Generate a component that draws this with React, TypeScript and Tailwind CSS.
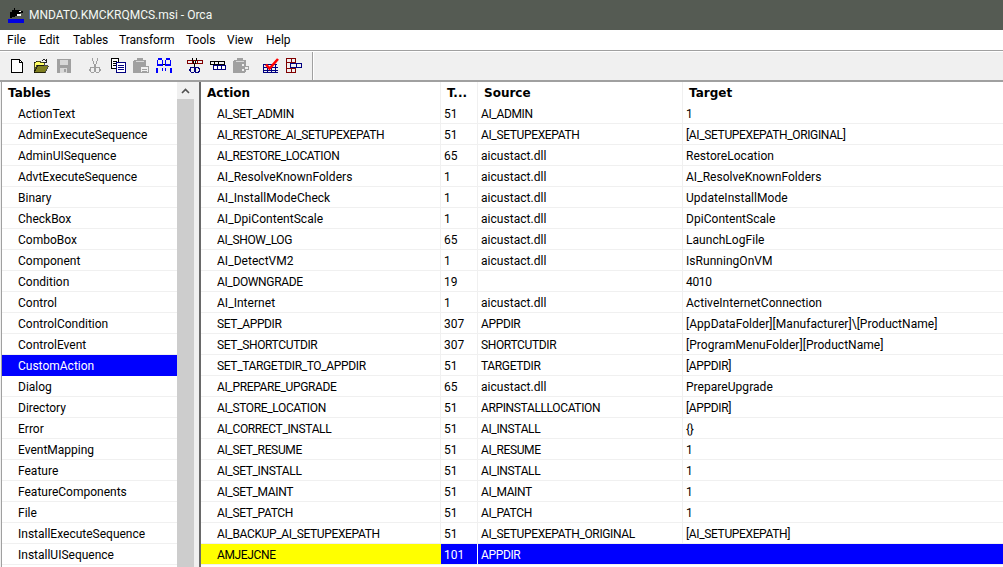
import React from "react";

const tables = ["ActionText","AdminExecuteSequence","AdminUISequence","AdvtExecuteSequence","Binary","CheckBox","ComboBox","Component","Condition","Control","ControlCondition","ControlEvent","CustomAction","Dialog","Directory","Error","EventMapping","Feature","FeatureComponents","File","InstallExecuteSequence","InstallUISequence"];
const rows: [string,string,string,string][] = [
["AI_SET_ADMIN","51","AI_ADMIN","1"],
["AI_RESTORE_AI_SETUPEXEPATH","51","AI_SETUPEXEPATH","[AI_SETUPEXEPATH_ORIGINAL]"],
["AI_RESTORE_LOCATION","65","aicustact.dll","RestoreLocation"],
["AI_ResolveKnownFolders","1","aicustact.dll","AI_ResolveKnownFolders"],
["AI_InstallModeCheck","1","aicustact.dll","UpdateInstallMode"],
["AI_DpiContentScale","1","aicustact.dll","DpiContentScale"],
["AI_SHOW_LOG","65","aicustact.dll","LaunchLogFile"],
["AI_DetectVM2","1","aicustact.dll","IsRunningOnVM"],
["AI_DOWNGRADE","19","","4010"],
["AI_Internet","1","aicustact.dll","ActiveInternetConnection"],
["SET_APPDIR","307","APPDIR","[AppDataFolder][Manufacturer]\\[ProductName]"],
["SET_SHORTCUTDIR","307","SHORTCUTDIR","[ProgramMenuFolder][ProductName]"],
["SET_TARGETDIR_TO_APPDIR","51","TARGETDIR","[APPDIR]"],
["AI_PREPARE_UPGRADE","65","aicustact.dll","PrepareUpgrade"],
["AI_STORE_LOCATION","51","ARPINSTALLLOCATION","[APPDIR]"],
["AI_CORRECT_INSTALL","51","AI_INSTALL","{}"],
["AI_SET_RESUME","51","AI_RESUME","1"],
["AI_SET_INSTALL","51","AI_INSTALL","1"],
["AI_SET_MAINT","51","AI_MAINT","1"],
["AI_SET_PATCH","51","AI_PATCH","1"],
["AI_BACKUP_AI_SETUPEXEPATH","51","AI_SETUPEXEPATH_ORIGINAL","[AI_SETUPEXEPATH]"],
];

const fit = (s: string) => (/^[^a-z]+$/.test(s) ? "tracking-[-0.36px]" : "tracking-[0.04px]");

const Ico = ({ children }: { children: React.ReactNode }) => (
  <svg width={16} height={16} viewBox="0 0 16 16" shapeRendering="crispEdges" className="block shrink-0">{children}</svg>
);

const NewIcon = () => <Ico><path d="M1.5 1.5h8l3 3v10h-11z" fill="#fff" stroke="#000"/><path d="M9.5 1.5v3h3" fill="none" stroke="#000"/></Ico>;
const OpenIcon = () => <Ico><path d="M1 14V4h2V3h4v1h4v3H4l-3 7z" fill="#ffff66" stroke="#000" strokeWidth=".7"/><path d="M1 14.5l3-7h11l-3 7z" fill="#7f7f20" stroke="#000" strokeWidth=".7"/><path d="M9 3c1-2 3-2 4 0M13 1v3h-3" fill="none" stroke="#222"/></Ico>;
const SaveIcon = () => <Ico><rect x="1" y="1" width="14" height="14" fill="#a0a0a0"/><rect x="4" y="2" width="8" height="5" fill="#d8d8d8"/><rect x="4" y="10" width="7" height="5" fill="#d8d8d8"/><rect x="8" y="11" width="2" height="3" fill="#a0a0a0"/></Ico>;
const CutIcon = () => <Ico><path d="M5 0l3 9M11 0L8 9" stroke="#a0a0a0" strokeWidth="1.2" fill="none"/><circle cx="5.5" cy="12" r="2.5" fill="none" stroke="#a0a0a0" strokeWidth="1.2"/><circle cx="10.5" cy="12" r="2.5" fill="none" stroke="#a0a0a0" strokeWidth="1.2"/></Ico>;
const CopyIcon = () => <Ico><rect x="1.5" y="0.5" width="7" height="10" fill="#fff" stroke="#000"/><path d="M3 3h4M3 5h4M3 7h4" stroke="#000"/><rect x="6.5" y="4.5" width="9" height="10" fill="#fff" stroke="#000080"/><path d="M8 7h6M8 9h6M8 11h6" stroke="#000080"/></Ico>;
const PasteIcon = () => <Ico><rect x="0" y="2" width="13" height="13" fill="#a0a0a0" rx="2"/><rect x="4" y="0" width="6" height="3" fill="#a0a0a0"/><rect x="3" y="3" width="8" height="1" fill="#d8d8d8"/><rect x="7.5" y="8.5" width="8" height="6" fill="#f0f0f0" stroke="#a0a0a0"/><path d="M9 11h5M9 13h5" stroke="#a0a0a0"/></Ico>;
const FindIcon = () => <Ico><g fill="#0000ff"><rect x="2" y="0" width="4" height="2"/><rect x="10" y="0" width="4" height="2"/><rect x="1" y="2" width="1" height="4"/><rect x="6" y="2" width="1" height="4"/><rect x="9" y="2" width="1" height="4"/><rect x="14" y="2" width="1" height="4"/><rect x="1" y="6" width="6" height="2"/><rect x="9" y="6" width="6" height="2"/><rect x="0" y="10" width="2" height="5"/><rect x="6" y="10" width="1" height="3"/><rect x="9" y="10" width="1" height="3"/><rect x="14" y="10" width="2" height="5"/></g><rect x="7" y="6" width="2" height="1" fill="#000"/></Ico>;
const CutTableIcon = () => <Ico><g fill="none" stroke="#800000"><rect x="0.5" y="2.5" width="5" height="3"/><rect x="5.5" y="2.5" width="5" height="3"/><rect x="10.5" y="2.5" width="5" height="3"/></g><path d="M5 0l3 9M10 0L7 9" stroke="#000" fill="none"/><circle cx="5.5" cy="12" r="2.5" fill="none" stroke="#000080" strokeWidth="1.2"/><circle cx="10" cy="12" r="2.5" fill="none" stroke="#000080" strokeWidth="1.2"/></Ico>;
const CopyTableIcon = () => <Ico><g fill="none"><rect x="0.5" y="3.5" width="4" height="3" stroke="#000"/><rect x="4.5" y="3.5" width="4" height="3" stroke="#000"/><rect x="8.5" y="3.5" width="6" height="3" stroke="#000"/><rect x="3.5" y="7.5" width="4" height="4" stroke="#000080" fill="#fff"/><rect x="7.5" y="7.5" width="4" height="4" stroke="#000080" fill="#fff"/><rect x="11.5" y="7.5" width="4" height="4" stroke="#000080" fill="#fff"/></g></Ico>;
const PasteTableIcon = () => <Ico><rect x="0" y="2" width="13" height="13" fill="#a0a0a0" rx="2"/><rect x="4" y="0" width="6" height="3" fill="#a0a0a0"/><rect x="3" y="3" width="8" height="1" fill="#d8d8d8"/><rect x="8.5" y="5.5" width="3" height="3" fill="#f0f0f0" stroke="#a0a0a0"/><rect x="8.5" y="10.5" width="3" height="3" fill="#f0f0f0" stroke="#a0a0a0"/><rect x="11.5" y="8" width="4" height="3" fill="#f0f0f0" stroke="#a0a0a0"/></Ico>;
const ValidateIcon = () => <Ico><g stroke="#000080" fill="none"><path d="M0 6.5h14M0 9.5h15M0 12.5h15M0.5 6v9M4.5 6v9M8.5 6v9M12.5 6v9"/></g><rect x="0" y="14" width="15" height="1" fill="#000080"/><path d="M3 6.5l3.5 4L15 1" fill="none" stroke="#ff0000" strokeWidth="2.6" shapeRendering="auto"/></Ico>;
const TablesIcon = () => <Ico><g fill="none" stroke="#800000"><rect x="0.5" y="0.5" width="9" height="4"/><path d="M5 .5v4"/><rect x="0.5" y="10.5" width="9" height="4"/><path d="M5 10.5v4"/><path d="M.5 4.5v6"/></g><g fill="none" stroke="#000080"><rect x="4.5" y="5.5" width="11" height="4"/><path d="M10 5.5v4"/></g></Ico>;

const font = "[font-family:'Roboto','Noto_Sans',sans-serif]";
const bold = "[font-family:'DejaVu_Sans','Liberation_Sans',sans-serif] font-bold";
const menu: [string, string][] = [["File","w-[32px]"],["Edit","w-[34px]"],["Tables","w-[46px]"],["Transform","w-[67px]"],["Tools","w-[41px]"],["View","w-[39px]"],["Help","w-[30px]"]];

export default function App() {
  return (
    <div className={`w-[1003px] h-[567px] overflow-hidden flex flex-col bg-[#f0f0f0] text-black text-[12px] ${font}`}>
      <div className="h-[30px] shrink-0 bg-[#555b53] flex items-center pl-[8px] gap-[5px] text-[#f4f8f4] text-[12px]">
        <svg width="16" height="16" viewBox="0 0 16 16" shapeRendering="crispEdges" className="shrink-0">
          <path d="M2 5h2V3h2V1h1v2h5v1h3v2h-3v1h-2v2H7v1H4v1H2z" fill="#000"/>
          <rect x="11" y="4" width="2" height="1" fill="#fff"/>
          <rect x="9" y="7" width="4" height="2" fill="#fff"/>
          <rect x="0" y="12" width="16" height="4" fill="#0000e0"/>
        </svg>
        <span>MNDATO.KMCKRQMCS.msi - Orca</span>
      </div>
      <div className="h-[20px] shrink-0 bg-white flex items-center text-[12px] pl-[7px]">
        {menu.map(([m, w]) => <span key={m} className={`${w} shrink-0`}>{m}</span>)}
      </div>
      <div className="h-[2px] shrink-0 bg-white border-t border-[#a0a0a0]" />
      <div className="h-[28px] shrink-0 flex items-center pl-[10px]">
        <div className="flex items-center gap-[7px]"><NewIcon /><OpenIcon /><SaveIcon /></div>
        <div className="flex items-center gap-[7px] ml-[15px]"><CutIcon /><CopyIcon /><PasteIcon /><FindIcon /></div>
        <div className="flex items-center gap-[7px] ml-[15px]"><CutTableIcon /><CopyTableIcon /><PasteTableIcon /></div>
        <div className="flex items-center gap-[7px] ml-[14px]"><ValidateIcon /><TablesIcon /></div>
        <div className="w-[2px] h-[28px] ml-[10px] bg-[#a0a0a0] border-r border-white" />
      </div>
      <div className="flex-1 min-h-0 flex border-t-2 border-[#a0a0a0]">
        <div className="w-[199px] shrink-0 flex pl-[1px] bg-[#f0f0f0]">
          <div className="w-[176px] shrink-0 bg-white flex flex-col overflow-hidden border-l border-[#a0a0a0]">
            <div className={`h-[21px] shrink-0 flex items-center pl-[6px] text-[12px] ${bold}`}>Tables</div>
            {tables.map(t => (
              <div key={t} className={`h-[21px] shrink-0 flex items-center pl-[16px] pt-[2px] border-b ${t === "CustomAction" ? "bg-[#0000ff] text-white border-[#0000ff]" : "border-[#f0f0f0]"}`}>{t}</div>
            ))}
          </div>
          <div className="w-[17px] shrink-0 flex flex-col">
            <div className="h-[17px] shrink-0 flex items-center justify-center">
              <svg width="9" height="6" viewBox="0 0 9 6"><path d="M1 5l3.5-3.5L8 5" fill="none" stroke="#505050" strokeWidth="1.6"/></svg>
            </div>
            <div className="flex-1 bg-[#cdcdcd]" />
          </div>
        </div>
        <div className="w-[2px] shrink-0 bg-[#696969]" />
        <div className="flex-1 min-w-0 bg-white flex flex-col overflow-hidden">
          <div className={`h-[21px] shrink-0 flex items-center text-[12px] ${bold}`}>
            <div className="w-[240px] shrink-0 pl-[6px] border-r border-[#f0f0f0] h-full flex items-center">Action</div>
            <div className="w-[37px] shrink-0 pl-[6px] border-r border-[#f0f0f0] h-full flex items-center">T...</div>
            <div className="w-[205px] shrink-0 pl-[6px] border-r border-[#f0f0f0] h-full flex items-center">Source</div>
            <div className="flex-1 pl-[6px]">Target</div>
          </div>
          {rows.map(r => (
            <div key={r[0]} className="h-[21px] shrink-0 flex border-b border-[#f0f0f0]">
              <div className={`w-[240px] shrink-0 pl-[16px] pt-[2px] border-r border-[#f0f0f0] flex items-center ${fit(r[0])}`}>{r[0]}</div>
              <div className="w-[37px] shrink-0 pl-[3px] pt-[2px] border-r border-[#f0f0f0] flex items-center">{r[1]}</div>
              <div className={`w-[205px] shrink-0 pl-[3px] pt-[2px] border-r border-[#f0f0f0] flex items-center ${fit(r[2])}`}>{r[2]}</div>
              <div className={`flex-1 pl-[3px] pt-[2px] flex items-center ${fit(r[3])}`}>{r[3]}</div>
            </div>
          ))}
          <div className="h-[21px] shrink-0 flex text-white border-b border-[#f0f0f0]">
            <div className="w-[240px] shrink-0 pl-[16px] pt-[2px] bg-[#ffff00] text-black flex items-center tracking-[-0.36px]">AMJEJCNE</div>
            <div className="w-[37px] shrink-0 pl-[3px] pt-[2px] bg-[#0000ff] border-r border-white flex items-center">101</div>
            <div className="flex-1 pl-[3px] pt-[2px] bg-[#0000ff] flex items-center tracking-[-0.36px]">APPDIR</div>
          </div>
        </div>
      </div>
    </div>
  );
}
